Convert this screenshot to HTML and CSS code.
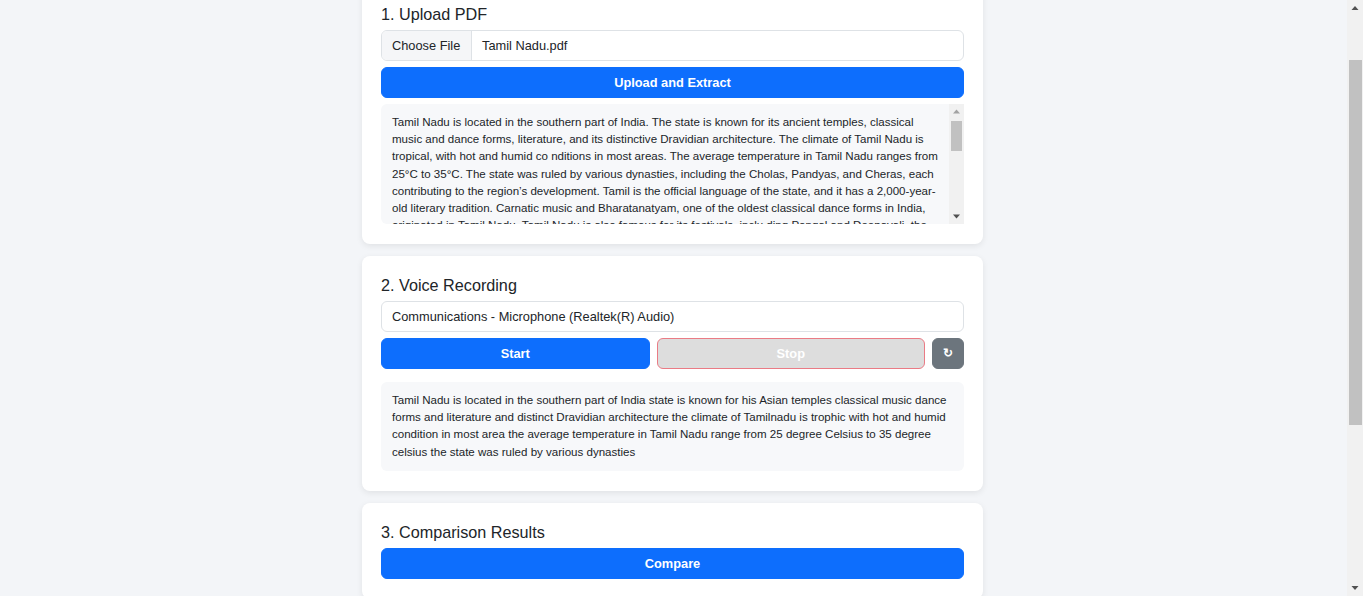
FILE: index.html
```html
<!DOCTYPE html>
<html lang="en">
<head>
<meta charset="utf-8">
<title>Reading Assessment</title>
<link rel="stylesheet" href="styles.css">
</head>
<body>
<main class="page">
  <h1 class="page-title">Reading Assessment</h1>

  <section class="card">
    <h2 class="card-title">1. Upload PDF</h2>
    <div class="file-input">
      <span class="file-btn">Choose File</span>
      <span class="file-name">Tamil Nadu.pdf</span>
    </div>
    <button class="btn btn-primary">Upload and Extract</button>
    <div class="text-box scroll">
      <div class="scroll-content">Tamil Nadu is located in the southern part of India. The state is known for its ancient temples, classical music and dance forms, literature, and its distinctive Dravidian architecture. The climate of Tamil Nadu is tropical, with hot and humid co nditions in most areas. The average temperature in Tamil Nadu ranges from 25°C to 35°C. The state was ruled by various dynasties, including the Cholas, Pandyas, and Cheras, each contributing to the region’s development. Tamil is the official language of the state, and it has a 2,000-year-old literary tradition. Carnatic music and Bharatanatyam, one of the oldest classical dance forms in India, originated in Tamil Nadu. Tamil Nadu is also famous for its festivals, inclu ding Pongal and Deepavali, the harvest festival celebrated with great enthusiasm. The capital city, Chennai, is a major centre for trade, education and culture.</div>
      <div class="sb sb-inner" aria-hidden="true">
        <svg class="sb-arrow" width="15" height="15" viewBox="0 0 15 15"><polygon points="4,9.5 11,9.5 7.5,5.5" fill="#a3a3a3"/></svg>
        <div class="sb-track"><div class="sb-thumb inner-thumb"></div></div>
        <svg class="sb-arrow" width="15" height="15" viewBox="0 0 15 15"><polygon points="4,5.5 11,5.5 7.5,9.5" fill="#505050"/></svg>
      </div>
    </div>
  </section>

  <section class="card">
    <h2 class="card-title">2. Voice Recording</h2>
    <select class="select">
      <option>Communications - Microphone (Realtek(R) Audio)</option>
    </select>
    <div class="btn-row">
      <button class="btn btn-primary">Start</button>
      <button class="btn btn-stop" disabled>Stop</button>
      <button class="btn btn-reset" title="Reset">↻</button>
    </div>
    <div class="text-box transcript">Tamil Nadu is located in the southern part of India state is known for his Asian temples classical music dance forms and literature and distinct Dravidian architecture the climate of Tamilnadu is trophic with hot and humid condition in most area the average temperature in Tamil Nadu range from 25 degree Celsius to 35 degree celsius the state was ruled by various dynasties</div>
  </section>

  <section class="card">
    <h2 class="card-title">3. Comparison Results</h2>
    <button class="btn btn-primary">Compare</button>
  </section>
</main>

<div class="sb sb-page" aria-hidden="true">
  <svg class="sb-arrow" width="16" height="15" viewBox="0 0 16 15"><polygon points="4.5,10 11.5,10 8,6" fill="#505050"/></svg>
  <div class="sb-track"><div class="sb-thumb page-thumb"></div></div>
  <svg class="sb-arrow" width="16" height="15" viewBox="0 0 16 15"><polygon points="4.5,5 11.5,5 8,9" fill="#505050"/></svg>
</div>
<script src="script.js"></script>
</body>
</html>
```

FILE: styles.css
```css
* { box-sizing: border-box; }

html, body {
  margin: 0;
  padding: 0;
}

html::-webkit-scrollbar { display: none; }

body {
  background: #f3f5f8;
  color: #212529;
  font-family: "Liberation Sans", Arial, sans-serif;
  padding-right: 18px;
}

.page {
  max-width: 621px;
  margin: 0 auto;
  padding: 20px 0 240px;
}

.page-title {
  margin: 0 0 8px;
  font-size: 24px;
  line-height: 29px;
  font-weight: 600;
  text-align: center;
}

.card {
  background: #fff;
  border-radius: 8px;
  box-shadow: 0 2px 6px rgba(0, 0, 0, 0.08);
  padding: 19px 19px 20px;
  margin-bottom: 12px;
  display: flex;
  flex-direction: column;
}

.card-title {
  margin: 0 0 5px;
  font-size: 16.2px;
  line-height: 21px;
  font-weight: 400;
  color: #212529;
}

.file-input {
  display: flex;
  height: 31px;
  border: 1px solid #dee2e6;
  border-radius: 6px;
  overflow: hidden;
  font-size: 12.8px;
  line-height: 29px;
  margin-bottom: 6px;
}

.file-btn {
  background: #f5f6f8;
  border-right: 1px solid #dee2e6;
  padding: 0 10px;
  width: 90px;
  white-space: nowrap;
}

.file-name {
  padding: 0 10px;
}

.btn {
  font-family: "Liberation Sans", Arial, sans-serif;
  font-size: 12.8px;
  font-weight: 700;
  line-height: 21px;
  padding: 4px 8px;
  height: 31px;
  border-radius: 6px;
  border: 1px solid transparent;
  color: #fff;
  cursor: pointer;
}

.btn-primary {
  background: #0d6efd;
  border-color: #0d6efd;
}

.select {
  appearance: none;
  -webkit-appearance: none;
  width: 100%;
  height: 31px;
  border: 1px solid #dee2e6;
  border-radius: 6px;
  background: #fff;
  color: #212529;
  font-family: "Liberation Sans", Arial, sans-serif;
  font-size: 12.8px;
  padding: 4px 10px;
  margin-bottom: 6px;
}

.btn-row {
  display: flex;
  gap: 7px;
}

.btn-row .btn-primary,
.btn-row .btn-stop {
  flex: 1;
}

.btn-stop {
  background: #dddddd;
  border-color: #ea7b85;
  color: #fff;
  cursor: default;
}

.btn-reset {
  width: 32px;
  padding: 0;
  background: #6c757d;
  border-color: #6c757d;
  font-size: 12px;
}

.text-box {
  background: #f7f8fa;
  border-radius: 6px;
  font-size: 11.55px;
  line-height: 17.2px;
  padding: 10px 11px;
  color: #212529;
}

.scroll {
  margin-top: 6px;
  height: 120px;
  padding: 0;
  display: flex;
  overflow: hidden;
  border-radius: 6px 0 0 6px;
}

.scroll-content {
  flex: 1;
  padding: 10px 11px;
  overflow: hidden;
}

.transcript {
  margin-top: 13px;
}

/* fake classic scrollbars */
.sb {
  display: flex;
  flex-direction: column;
  background: #f1f1f1;
}

.sb-inner {
  width: 15px;
  flex: none;
}

.sb-page {
  position: fixed;
  top: 0;
  right: 0;
  width: 16px;
  height: 100vh;
}

.sb-arrow {
  display: block;
  flex: none;
}

.sb-track {
  flex: 1;
  display: flex;
  flex-direction: column;
}

.sb-thumb {
  background: #c1c1c1;
}

.inner-thumb {
  margin: 2px 2px 0 2px;
  height: 30px;
}

.page-thumb {
  margin: 45px 1px 0 2px;
  height: 365px;
}
```

FILE: script.js
```js
window.scrollTo(0, 72);
```
